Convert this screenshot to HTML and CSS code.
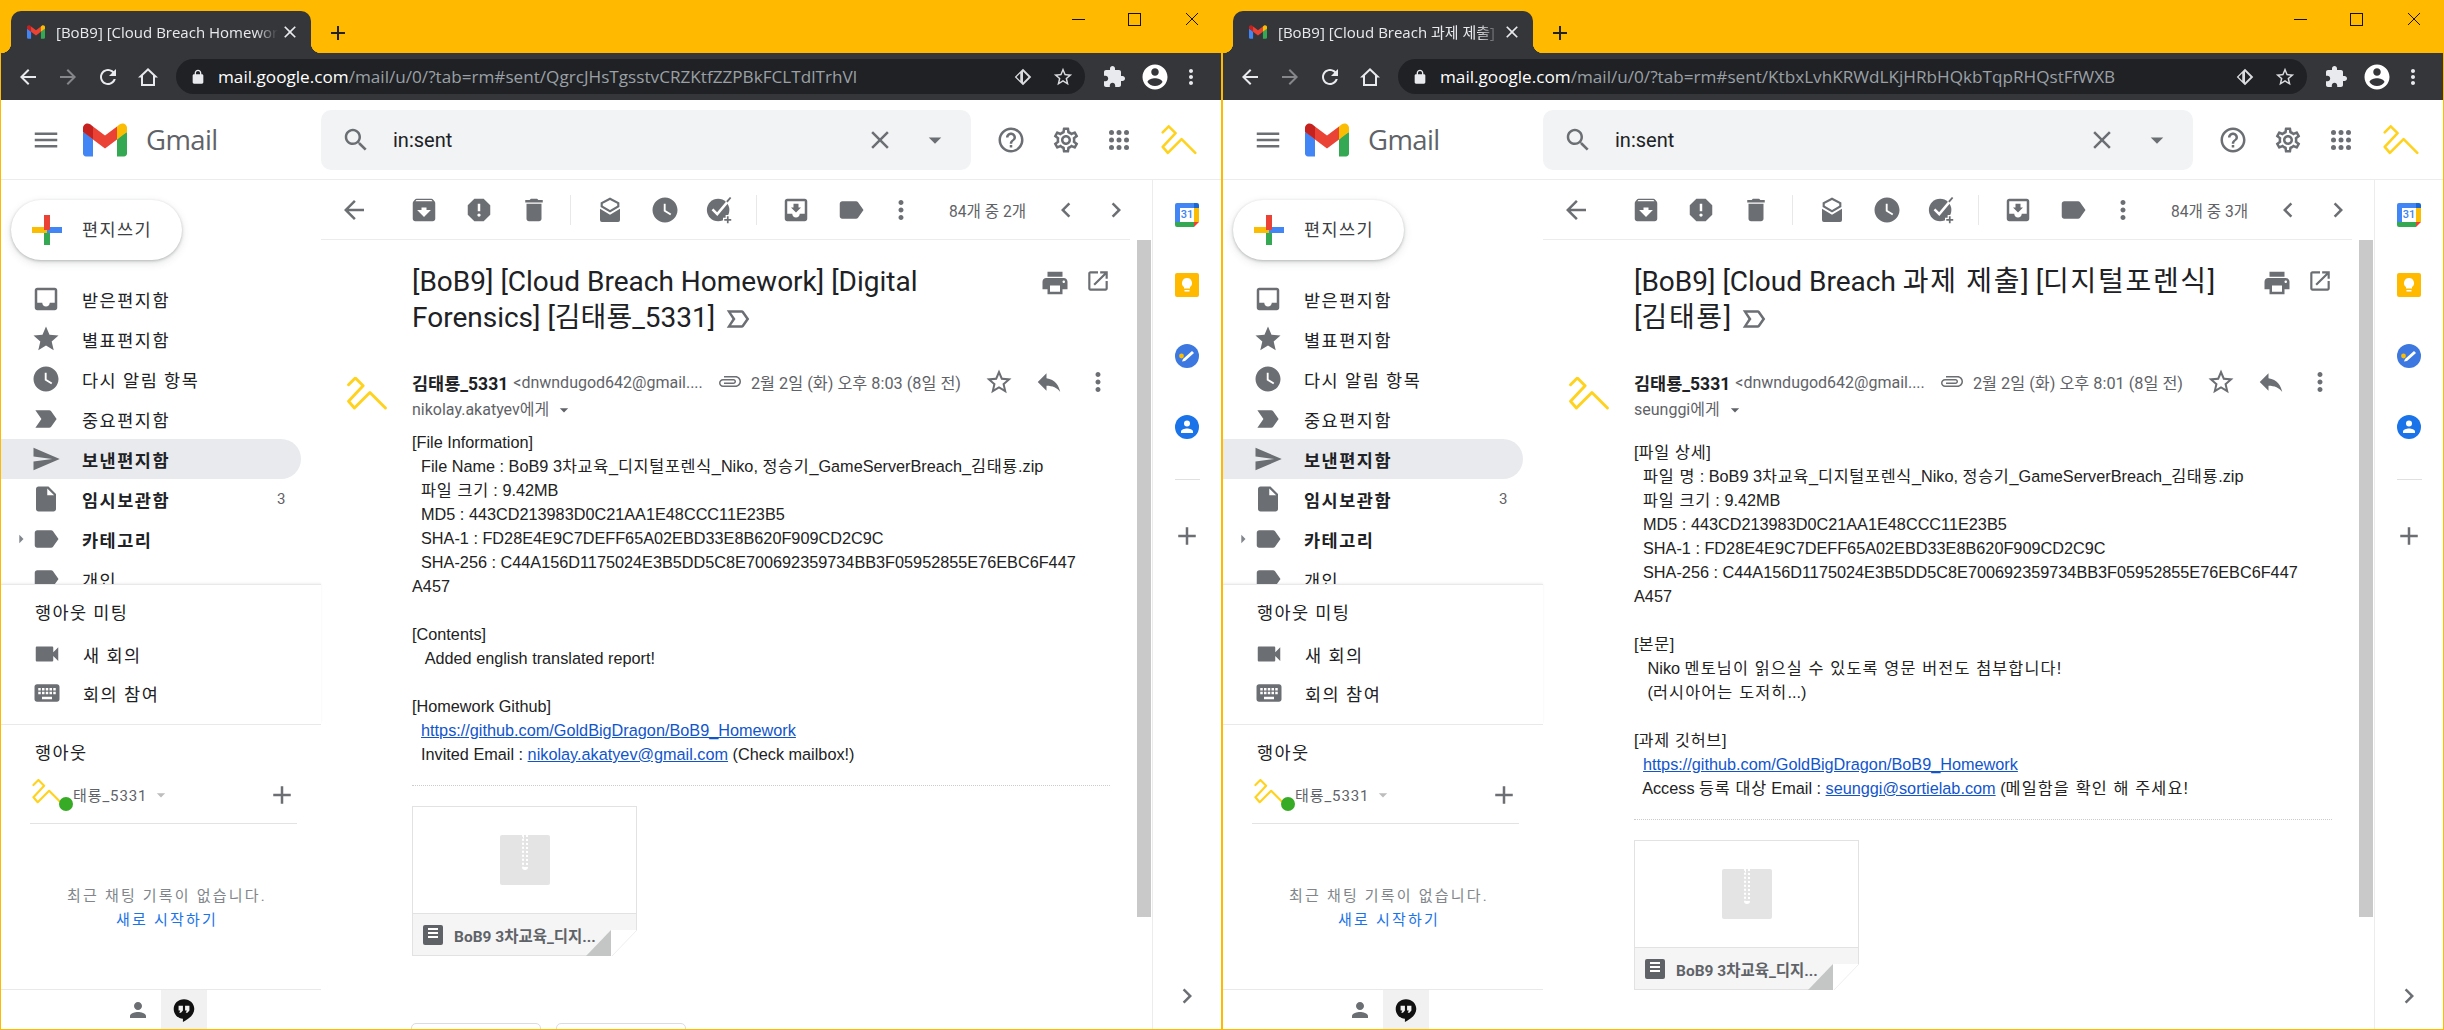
FILE: index.html
```html
<!DOCTYPE html>
<html lang="ko">
<head>
<meta charset="utf-8">
<title>Gmail</title>
<link rel="stylesheet" href="styles.css">
</head>
<body>
<svg class="defs" xmlns="http://www.w3.org/2000/svg">
  <symbol id="back" viewBox="0 0 24 24"><path d="M20 11H7.83l5.59-5.59L12 4l-8 8 8 8 1.41-1.41L7.83 13H20v-2z"/></symbol>
  <symbol id="fwd" viewBox="0 0 24 24"><path d="M4 11h12.17l-5.59-5.59L12 4l8 8-8 8-1.41-1.41L16.17 13H4v-2z"/></symbol>
  <symbol id="reload" viewBox="0 0 24 24"><path d="M17.65 6.35C16.2 4.9 14.21 4 12 4c-4.42 0-7.99 3.58-7.99 8s3.57 8 7.99 8c3.73 0 6.84-2.55 7.73-6h-2.08c-.82 2.33-3.04 4-5.65 4-3.31 0-6-2.69-6-6s2.69-6 6-6c1.66 0 3.14.69 4.22 1.78L13 11h7V4l-2.35 2.35z"/></symbol>
  <symbol id="home" viewBox="0 0 24 24"><path fill-rule="evenodd" d="M12 3L2 12.5h3V21h14v-8.500h3zM12 5.800l5 4.700V19H7v-8.500z"/></symbol>
  <symbol id="lock" viewBox="0 0 24 24"><path d="M18 8h-1V6c0-2.760-2.240-5-5-5S7 3.240 7 6v2H6c-1.100 0-2 .9-2 2v10c0 1.100.9 2 2 2h12c1.100 0 2-.9 2-2V10c0-1.100-.9-2-2-2zM9 6c0-1.660 1.340-3 3-3s3 1.340 3 3v2H9V6z"/></symbol>
  <symbol id="staro" viewBox="0 0 24 24"><path d="M22 9.240l-7.190-.62L12 2 9.190 8.630 2 9.240l5.460 4.730L5.820 21 12 17.270 18.180 21l-1.630-7.030L22 9.240zM12 15.400l-3.760 2.270 1-4.280-3.320-2.880 4.380-.38L12 6.100l1.710 4.040 4.380.38-3.320 2.880 1 4.280L12 15.400z"/></symbol>
  <symbol id="star" viewBox="0 0 24 24"><path d="M12 17.270L18.180 21l-1.640-7.030L22 9.240l-7.190-.61L12 2 9.190 8.630 2 9.240l5.460 4.730L5.820 21z"/></symbol>
  <symbol id="ext" viewBox="0 0 24 24"><path d="M20.500 11H19V7c0-1.100-.9-2-2-2h-4V3.500C13 2.120 11.880 1 10.500 1S8 2.120 8 3.500V5H4c-1.100 0-1.990.9-1.990 2v3.800H3.500c1.490 0 2.700 1.210 2.700 2.700s-1.210 2.700-2.700 2.700H2V20c0 1.100.9 2 2 2h3.800v-1.500c0-1.490 1.210-2.700 2.700-2.700 1.490 0 2.700 1.210 2.700 2.700V22H17c1.100 0 2-.9 2-2v-4h1.500c1.380 0 2.500-1.120 2.500-2.500S21.880 11 20.500 11z"/></symbol>
  <symbol id="acct" viewBox="0 0 24 24"><path d="M12 2C6.480 2 2 6.480 2 12s4.480 10 10 10 10-4.480 10-10S17.520 2 12 2zm0 3c1.660 0 3 1.340 3 3s-1.340 3-3 3-3-1.340-3-3 1.340-3 3-3zm0 14.200c-2.500 0-4.710-1.280-6-3.220.03-1.990 4-3.080 6-3.080 1.990 0 5.970 1.090 6 3.080-1.290 1.940-3.500 3.220-6 3.220z"/></symbol>
  <symbol id="more" viewBox="0 0 24 24"><path d="M12 8c1.100 0 2-.9 2-2s-.9-2-2-2-2 .9-2 2 .9 2 2 2zm0 2c-1.100 0-2 .9-2 2s.9 2 2 2 2-.9 2-2-.9-2-2-2zm0 6c-1.100 0-2 .9-2 2s.9 2 2 2 2-.9 2-2-.9-2-2-2z"/></symbol>
  <symbol id="menu" viewBox="0 0 24 24"><path d="M3 18h18v-2H3v2zm0-5h18v-2H3v2zm0-7v2h18V6H3z"/></symbol>
  <symbol id="search" viewBox="0 0 24 24"><path d="M15.500 14h-.79l-.28-.27C15.410 12.590 16 11.110 16 9.500 16 5.910 13.090 3 9.500 3S3 5.910 3 9.500 5.910 16 9.500 16c1.610 0 3.090-.59 4.230-1.570l.27.28v.79l5 4.990L20.490 19l-4.990-5zm-6 0C7.010 14 5 11.990 5 9.500S7.010 5 9.500 5 14 7.010 14 9.500 11.990 14 9.500 14z"/></symbol>
  <symbol id="close" viewBox="0 0 24 24"><path d="M19 6.410L17.590 5 12 10.590 6.410 5 5 6.410 10.590 12 5 17.590 6.410 19 12 13.410 17.590 19 19 17.590 13.410 12z"/></symbol>
  <symbol id="caret" viewBox="0 0 24 24"><path d="M7 10l5 5 5-5z"/></symbol>
  <symbol id="caretr" viewBox="0 0 24 24"><path d="M10 7l5 5-5 5z"/></symbol>
  <symbol id="help" viewBox="0 0 24 24"><path d="M11 18h2v-2h-2v2zm1-16C6.480 2 2 6.480 2 12s4.480 10 10 10 10-4.480 10-10S17.520 2 12 2zm0 18c-4.410 0-8-3.590-8-8s3.590-8 8-8 8 3.590 8 8-3.590 8-8 8zm0-14c-2.210 0-4 1.790-4 4h2c0-1.100.9-2 2-2s2 .9 2 2c0 2-3 1.750-3 5h2c0-2.250 3-2.500 3-5 0-2.210-1.790-4-4-4z"/></symbol>
  <symbol id="gear" viewBox="0 0 24 24"><path d="M19.430 12.980c.04-.32.07-.64.07-.98 0-.34-.03-.66-.07-.98l2.110-1.650c.19-.15.24-.42.12-.64l-2-3.460c-.09-.16-.26-.25-.44-.25-.06 0-.12.01-.17.03l-2.490 1c-.52-.4-1.080-.73-1.690-.98l-.38-2.650C14.460 2.180 14.250 2 14 2h-4c-.25 0-.46.18-.49.42l-.38 2.650c-.61.25-1.170.59-1.690.98l-2.490-1c-.06-.02-.12-.03-.18-.03-.17 0-.34.09-.43.25l-2 3.460c-.13.22-.07.49.12.64l2.110 1.650c-.04.32-.07.65-.07.98 0 .33.03.66.07.98l-2.110 1.650c-.19.15-.24.42-.12.64l2 3.460c.09.16.26.25.44.25.06 0 .12-.01.17-.03l2.490-1c.52.4 1.080.73 1.690.98l.38 2.650c.03.24.24.42.49.42h4c.25 0 .46-.18.49-.42l.38-2.650c.61-.25 1.170-.59 1.690-.98l2.490 1c.06.02.12.03.18.03.17 0 .34-.09.43-.25l2-3.460c.12-.22.07-.49-.12-.64l-2.110-1.650zm-1.980-1.710c.04.31.05.52.05.73 0 .21-.02.43-.05.73l-.14 1.130.89.7 1.080.84-.7 1.210-1.270-.51-1.040-.42-.9.68c-.43.32-.84.56-1.250.73l-1.060.43-.16 1.130-.2 1.350h-1.400l-.19-1.350-.16-1.130-1.060-.43c-.43-.18-.83-.41-1.230-.71l-.91-.7-1.060.43-1.270.51-.7-1.210 1.080-.84.89-.7-.14-1.130c-.03-.31-.05-.54-.05-.74s.02-.43.05-.73l.14-1.130-.89-.7-1.080-.84.7-1.210 1.270.51 1.040.42.9-.68c.43-.32.84-.56 1.250-.73l1.060-.43.16-1.130.2-1.350h1.390l.19 1.350.16 1.130 1.060.43c.43.18.83.41 1.230.71l.91.7 1.060-.43 1.270-.51.7 1.210-1.070.85-.89.7.14 1.130zM12 8c-2.210 0-4 1.790-4 4s1.790 4 4 4 4-1.790 4-4-1.790-4-4-4zm0 6c-1.100 0-2-.9-2-2s.9-2 2-2 2 .9 2 2-.9 2-2 2z"/></symbol>
  <symbol id="apps" viewBox="0 0 24 24"><circle cx="6" cy="6" r="2"/><circle cx="12" cy="6" r="2"/><circle cx="18" cy="6" r="2"/><circle cx="6" cy="12" r="2"/><circle cx="12" cy="12" r="2"/><circle cx="18" cy="12" r="2"/><circle cx="6" cy="18" r="2"/><circle cx="12" cy="18" r="2"/><circle cx="18" cy="18" r="2"/></symbol>
  <symbol id="inbox" viewBox="0 0 24 24"><path d="M19 3H5c-1.100 0-2 .9-2 2v14c0 1.100.9 2 2 2h14c1.100 0 2-.9 2-2V5c0-1.100-.9-2-2-2zm0 12h-4c0 1.660-1.340 3-3 3s-3-1.340-3-3H5V5h14v10z"/></symbol>
  <symbol id="clock" viewBox="0 0 24 24"><path d="M12 2C6.500 2 2 6.500 2 12s4.500 10 10 10 10-4.500 10-10S17.500 2 12 2zm4.200 14.200L11 13V7h1.500v5.200l4.500 2.700-.8 1.300z"/></symbol>
  <symbol id="imp" viewBox="0 0 24 24"><path d="M3.500 18.990l11 .01c.67 0 1.270-.33 1.630-.84L20.500 12l-4.370-6.160c-.36-.51-.96-.84-1.630-.84l-11 .01L8.340 12 3.500 18.990z"/></symbol>
  <symbol id="impo" viewBox="0 0 24 24"><path d="M15 19H3l4.500-7L3 5h12c.65 0 1.260.31 1.630.84L21 12l-4.370 6.160c-.37.52-.98.84-1.630.84zm-8.500-2H15l3.500-5-3.500-5H6.500l3.500 5-3.500 5z"/></symbol>
  <symbol id="send" viewBox="0 0 24 24"><path d="M2.010 21L23 12 2.010 3 2 10l15 2-15 2z"/></symbol>
  <symbol id="file" viewBox="0 0 24 24"><path d="M6 2c-1.100 0-1.990.9-1.990 2L4 20c0 1.100.89 2 1.990 2H18c1.100 0 2-.9 2-2V8l-6-6H6zm7 7V3.500L18.500 9H13z"/></symbol>
  <symbol id="label" viewBox="0 0 24 24"><path d="M17.630 5.840C17.270 5.330 16.670 5 16 5L5 5.010C3.900 5.010 3 5.900 3 7v10c0 1.100.9 1.990 2 1.990L16 19c.67 0 1.270-.33 1.630-.84L22 12l-4.370-6.160z"/></symbol>
  <symbol id="video" viewBox="0 0 24 24"><path d="M17 10.500V7c0-.55-.45-1-1-1H4c-.55 0-1 .45-1 1v10c0 .55.45 1 1 1h12c.55 0 1-.45 1-1v-3.500l4 4v-11l-4 4z"/></symbol>
  <symbol id="kbd" viewBox="0 0 24 24"><path d="M20 5H4c-1.100 0-1.990.9-1.990 2L2 17c0 1.100.9 2 2 2h16c1.100 0 2-.9 2-2V7c0-1.100-.9-2-2-2zm-9 3h2v2h-2V8zm0 3h2v2h-2v-2zM8 8h2v2H8V8zm0 3h2v2H8v-2zm-1 2H5v-2h2v2zm0-3H5V8h2v2zm9 7H8v-2h8v2zm0-4h-2v-2h2v2zm0-3h-2V8h2v2zm3 3h-2v-2h2v2zm0-3h-2V8h2v2z"/></symbol>
  <symbol id="add" viewBox="0 0 24 24"><path d="M19 13h-6v6h-2v-6H5v-2h6V5h2v6h6v2z"/></symbol>
  <symbol id="person" viewBox="0 0 24 24"><path d="M12 12c2.210 0 4-1.790 4-4s-1.790-4-4-4-4 1.790-4 4 1.790 4 4 4zm0 2c-2.670 0-8 1.340-8 4v2h16v-2c0-2.660-5.330-4-8-4z"/></symbol>
  <symbol id="archive" viewBox="0 0 24 24"><path d="M20.540 5.230l-1.390-1.680C18.880 3.210 18.470 3 18 3H6c-.47 0-.88.21-1.160.55L3.460 5.230C3.170 5.570 3 6.020 3 6.500V19c0 1.100.9 2 2 2h14c1.100 0 2-.9 2-2V6.500c0-.48-.17-.93-.46-1.270zM12 17.500L6.500 12H10v-2h4v2h3.500L12 17.500zM5.120 5l.81-1h12l.94 1H5.120z"/></symbol>
  <symbol id="report" viewBox="0 0 24 24"><path d="M15.730 3H8.270L3 8.270v7.460L8.270 21h7.460L21 15.730V8.270L15.730 3zM12 17.300c-.72 0-1.300-.58-1.300-1.300 0-.72.58-1.300 1.300-1.300.72 0 1.300.58 1.300 1.300 0 .72-.58 1.300-1.300 1.300zm1-4.300h-2V7h2v6z"/></symbol>
  <symbol id="trash" viewBox="0 0 24 24"><path d="M6 19c0 1.100.9 2 2 2h8c1.100 0 2-.9 2-2V7H6v12zM19 4h-3.500l-1-1h-5l-1 1H5v2h14V4z"/></symbol>
  <symbol id="drafts" viewBox="0 0 24 24"><path d="M12 2L4.500 6v3.500L12 14l7.500-4.500V6zM6.200 7l5.800-3 5.800 3v1.500L12 12 6.200 8.500z" fill-rule="evenodd"/><path d="M4 11l8 4.800 8-4.800v9a1.500 1.500 0 0 1-1.500 1.500h-13A1.500 1.500 0 0 1 4 20z"/></symbol>
  <symbol id="task" viewBox="0 0 24 24"><circle cx="10.500" cy="12" r="9"/><path d="M6 11.500l3.800 3.800L18 5.500" fill="none" stroke="#fff" stroke-width="2"/><path d="M17.500 5.500l3-3.500" fill="none" stroke="#6b6e72" stroke-width="1.500"/><path d="M17 16.500h2.400v2.100h2.100V21h-2.100v2.100H17V21h-2.100v-2.400H17z" stroke="#fff" stroke-width="1"/></symbol>
  <symbol id="move" viewBox="0 0 24 24"><path d="M19 3H4.990c-1.110 0-1.980.89-1.980 2L3 19c0 1.100.88 2 1.990 2H19c1.100 0 2-.9 2-2V5c0-1.110-.9-2-2-2zm0 12h-4c0 1.660-1.350 3-3 3s-3-1.340-3-3H4.990V5H19v10zm-3-5h-2V7h-4v3H8l4 4 4-4z"/></symbol>
  <symbol id="left" viewBox="0 0 24 24"><path d="M15.410 7.410L14 6l-6 6 6 6 1.410-1.410L10.830 12z"/></symbol>
  <symbol id="right" viewBox="0 0 24 24"><path d="M10 6L8.590 7.410 13.170 12l-4.580 4.590L10 18l6-6z"/></symbol>
  <symbol id="print" viewBox="0 0 24 24"><path d="M19 8H5c-1.660 0-3 1.340-3 3v6h4v4h12v-4h4v-6c0-1.660-1.340-3-3-3zm-3 11H8v-5h8v5zm3-7c-.55 0-1-.45-1-1s.45-1 1-1 1 .45 1 1-.45 1-1 1zm-1-9H6v4h12V3z"/></symbol>
  <symbol id="open" viewBox="0 0 24 24"><path d="M19 19H5V5h7V3H5c-1.110 0-2 .9-2 2v14c0 1.100.89 2 2 2h14c1.100 0 2-.9 2-2v-7h-2v7zM14 3v2h3.590l-9.830 9.830 1.410 1.410L19 6.410V10h2V3h-7z"/></symbol>
  <symbol id="clip" viewBox="0 0 24 24"><path transform="rotate(-90 12 12)" d="M16.500 6v11.500c0 2.210-1.790 4-4 4s-4-1.790-4-4V5c0-1.380 1.120-2.500 2.500-2.500s2.500 1.120 2.500 2.500v10.500c0 .55-.45 1-1 1s-1-.45-1-1V6H10v9.500c0 1.380 1.120 2.500 2.500 2.500s2.500-1.120 2.500-2.500V5c0-2.210-1.790-4-4-4S7 2.790 7 5v12.500c0 3.040 2.460 5.500 5.500 5.500s5.500-2.460 5.500-5.500V6h-1.500z"/></symbol>
  <symbol id="reply" viewBox="0 0 24 24"><path d="M10 9V5l-7 7 7 7v-4.100c5 0 8.500 1.600 11 5.100-1-5-4-10-11-11z"/></symbol>
  <symbol id="lens" viewBox="0 0 24 24"><path d="M12 3l9 9-9 9-9-9zM12 6v12l6-6zM9 8l-4 4 4 4z" fill-rule="evenodd"/></symbol>
  <symbol id="chat" viewBox="0 0 24 24"><path d="M12 2C6.500 2 2.500 6 2.500 11S6.500 20 11 20v3c5-2.500 10.500-6.500 10.500-12C21.500 6 17.500 2 12 2z"/><path fill="#f1f1f1" d="M7 8h4v4.500l-1.800 2H7.600l1-2H7zM13 8h4v4.500l-1.800 2h-1.600l1-2H13z"/></symbol>
  <symbol id="logo" viewBox="0 0 42 34"><path fill="none" stroke="#ffd21e" stroke-width="3" stroke-linejoin="round" stroke-linecap="round" d="M2 8l7-7 8 8L2 25l6 7 16-16 16 16"/></symbol>
  <symbol id="gm" viewBox="0 0 256 193"><path fill="#4285F4" d="M58.180 192.050V93.140L27.500 65.080 0 49.500v125.100c0 9.660 7.830 17.450 17.450 17.450h40.730z"/><path fill="#34A853" d="M197.820 192.050h40.730c9.650 0 17.450-7.820 17.450-17.450V49.500l-31.160 17.840-27.020 25.800v98.910z"/><path fill="#EA4335" d="M58.180 93.140l-4.170-38.650 4.170-36.990L128 69.870l69.820-52.370 4.670 34.990-4.670 40.650L128 145.500z"/><path fill="#FBBC04" d="M197.820 17.500v75.640L256 49.500V26.230c0-21.590-24.640-33.890-41.890-20.950l-16.290 12.220z"/><path fill="#C5221F" d="M0 49.500l26.760 20.070 31.420 23.570V17.500L41.890 5.280C24.610-7.660 0 4.640 0 26.230V49.500z"/></symbol>
  <symbol id="plus4" viewBox="0 0 30 30"><path fill="#34a853" d="M12 15h6v15h-6z"/><path fill="#4285f4" d="M15 12h15v6H15z"/><path fill="#fbbc04" d="M0 12h15v6H0z"/><path fill="#ea4335" d="M12 0h6v15h-6z"/></symbol>
  <symbol id="cal" viewBox="0 0 24 24"><path fill="#4285f4" d="M2 0h17v5H5v14H0V2a2 2 0 0 1 2-2z"/><path fill="#1967d2" d="M19 0h3a2 2 0 0 1 2 2v3h-5z"/><path fill="#fbbc04" d="M19 5h5v14h-5z"/><path fill="#34a853" d="M0 19h19v5H2a2 2 0 0 1-2-2z"/><path fill="#ea4335" d="M19 19h5l-5 5z"/><path fill="#fff" d="M5 5h14v14H5z"/></symbol>
  <symbol id="keep" viewBox="0 0 24 24"><rect width="24" height="24" rx="2" fill="#ffba00"/><path fill="#fff" d="M12 5a5 5 0 0 0-3 9v1.500h6V14a5 5 0 0 0-3-9zM9.500 17h5v1.500h-5z"/></symbol>
  <symbol id="tasks" viewBox="0 0 24 24"><circle cx="12" cy="12" r="12" fill="#3c78e0"/><path fill="#fff" d="M8 15l9-8 2 2-9 8-3 .5z"/><circle cx="6.500" cy="12" r="2.400" fill="#fbbc04"/></symbol>
  <symbol id="cont" viewBox="0 0 24 24"><circle cx="12" cy="12" r="12" fill="#1a73e8"/><circle cx="12" cy="8.500" r="3" fill="#fff"/><path fill="#fff" d="M6 16.500c0-2 3.500-3 6-3s6 1 6 3V18H6z"/></symbol>
</svg>

<main class="desk">

<section class="win">
  <div class="tabstrip">
    <div class="tab">
      <svg class="fav"><use href="#gm"/></svg>
      <span class="tab-title">[BoB9] [Cloud Breach Homework] [Digital Forensics]</span>
      <svg class="tab-x"><use href="#close"/></svg>
    </div>
    <svg class="newtab"><use href="#add"/></svg>
    <div class="winctl">
      <span class="wc-min"></span><span class="wc-max"></span>
      <svg class="wc-close" viewBox="0 0 14 14"><path d="M1 1l12 12M13 1L1 13"/></svg>
    </div>
  </div>
  <div class="chrome">
    <svg class="cb"><use href="#back"/></svg>
    <svg class="cb dim"><use href="#fwd"/></svg>
    <svg class="cb"><use href="#reload"/></svg>
    <svg class="cb"><use href="#home"/></svg>
    <div class="omni">
      <svg class="lock"><use href="#lock"/></svg>
      <span class="url"><b>mail.google.com</b>/mail/u/0/?tab=rm#sent/QgrcJHsTgsstvCRZKtfZZPBkFCLTdlTrhVl</span>
      <svg class="omni-i"><use href="#lens"/></svg>
      <svg class="omni-i last"><use href="#staro"/></svg>
    </div>
    <svg class="cb first"><use href="#ext"/></svg>
    <svg class="cb big"><use href="#acct"/></svg>
    <svg class="cb"><use href="#more"/></svg>
  </div>
  <header class="ghead">
    <div class="brand">
      <svg class="i ham"><use href="#menu"/></svg>
      <svg class="mlogo"><use href="#gm"/></svg>
      <span class="gname">Gmail</span>
    </div>
    <div class="searchbox">
      <svg class="i"><use href="#search"/></svg>
      <span class="q">in:sent</span>
      <svg class="i"><use href="#close"/></svg>
      <svg class="i q-caret"><use href="#caret"/></svg>
    </div>
    <svg class="i h1st"><use href="#help"/></svg>
    <svg class="i h2"><use href="#gear"/></svg>
    <svg class="i h3"><use href="#apps"/></svg>
    <svg class="hlogo"><use href="#logo"/></svg>
  </header>
  <div class="main">
    <nav class="side">
      <div class="compose"><svg class="i"><use href="#plus4"/></svg><span>편지쓰기</span></div>
      <div class="nav">
        <div class="row"><svg class="i"><use href="#inbox"/></svg><span>받은편지함</span></div>
        <div class="row"><svg class="i"><use href="#star"/></svg><span>별표편지함</span></div>
        <div class="row"><svg class="i"><use href="#clock"/></svg><span>다시 알림 항목</span></div>
        <div class="row"><svg class="i"><use href="#imp"/></svg><span>중요편지함</span></div>
        <div class="row on"><svg class="i"><use href="#send"/></svg><span>보낸편지함</span></div>
        <div class="row bold"><svg class="i"><use href="#file"/></svg><span>임시보관함</span><em>3</em></div>
        <div class="row bold"><svg class="tree"><use href="#caretr"/></svg><svg class="i"><use href="#label"/></svg><span>카테고리</span></div>
        <div class="row"><svg class="i"><use href="#label"/></svg><span>개인</span></div>
      </div>
      <div class="sect meet">
        <div class="sect-t">행아웃 미팅</div>
        <div class="row"><svg class="i"><use href="#video"/></svg><span>새 회의</span></div>
        <div class="row"><svg class="i"><use href="#kbd"/></svg><span>회의 참여</span></div>
      </div>
      <div class="sect hang">
        <div class="sect-t">행아웃</div>
        <div class="huser">
          <div class="hava"><svg class="hlogo2"><use href="#logo"/></svg><i class="dot"></i></div>
          <span class="hname">태룡_5331</span>
          <svg class="hcaret"><use href="#caret"/></svg>
          <svg class="i hadd"><use href="#add"/></svg>
        </div>
      </div>
      <div class="empty"><div>최근 채팅 기록이 없습니다.</div><a href="#">새로 시작하기</a></div>
      <div class="sbot">
        <div class="stab"><svg class="i"><use href="#person"/></svg></div>
        <div class="stab act"><svg class="i blk"><use href="#chat"/></svg></div>
      </div>
    </nav>
    <div class="content">
      <div class="ctool">
        <span class="tb b0"><svg class="i"><use href="#back"/></svg></span>
        <span class="tb b1"><svg class="i"><use href="#archive"/></svg></span>
        <span class="tb"><svg class="i"><use href="#report"/></svg></span>
        <span class="tb"><svg class="i"><use href="#trash"/></svg></span>
        <i class="tsep"></i>
        <span class="tb"><svg class="i"><use href="#drafts"/></svg></span>
        <span class="tb"><svg class="i"><use href="#clock"/></svg></span>
        <span class="tb"><svg class="i"><use href="#task"/></svg></span>
        <i class="tsep"></i>
        <span class="tb"><svg class="i"><use href="#move"/></svg></span>
        <span class="tb"><svg class="i"><use href="#label"/></svg></span>
        <span class="tb bm"><svg class="i"><use href="#more"/></svg></span>
        <span class="cnt">84개 중 2개</span>
        <span class="tb n"><svg class="i"><use href="#left"/></svg></span>
        <span class="tb n"><svg class="i"><use href="#right"/></svg></span>
      </div>
      <div class="scrollwrap">
        <article class="mail">
          <div class="subj">
            <h1>[BoB9] [Cloud Breach Homework] [Digital<br>Forensics] [김태룡_5331] <svg class="i impm"><use href="#impo"/></svg></h1>
            <svg class="i sa"><use href="#print"/></svg>
            <svg class="i sa2"><use href="#open"/></svg>
          </div>
          <div class="msg">
            <svg class="ava"><use href="#logo"/></svg>
            <div class="msg-main">
              <div class="mh">
                <b class="who">김태룡_5331</b><span class="addr">&lt;dnwndugod642@gmail....</span>
                <svg class="i clip"><use href="#clip"/></svg>
                <span class="date">2월 2일 (화) 오후 8:03 (8일 전)</span>
                <svg class="i mstar"><use href="#staro"/></svg>
                <svg class="i mrep"><use href="#reply"/></svg>
                <svg class="i"><use href="#more"/></svg>
              </div>
              <div class="to">nikolay.akatyev에게<svg class="tocaret"><use href="#caret"/></svg></div>
              <div class="body">
                <div class="ln">[File Information]</div>
                <div class="ln">  File Name : BoB9 3<span class="k">차교육</span>_<span class="k">디지털포렌식</span>_Niko, <span class="k">정승기</span>_GameServerBreach_<span class="k">김태룡</span>.zip</div>
                <div class="ln">  <span class="k">파일 크기</span> : 9.42MB</div>
                <div class="ln">  MD5 : 443CD213983D0C21AA1E48CCC11E23B5</div>
                <div class="ln">  SHA-1 : FD28E4E9C7DEFF65A02EBD33E8B620F909CD2C9C</div>
                <div class="ln">  SHA-256 : C44A156D1175024E3B5DD5C8E700692359734BB3F05952855E76EBC6F447</div>
                <div class="ln">A457</div>
                <div class="ln"></div>
                <div class="ln">[Contents]</div>
                <div class="ln">   Added english translated report!</div>
                <div class="ln"></div>
                <div class="ln">[Homework Github]</div>
                <div class="ln">  <a href="#">https://github.com/GoldBigDragon/BoB9_Homework</a></div>
                <div class="ln">  Invited Email : <a href="#">nikolay.akatyev@gmail.com</a> (Check mailbox!)</div>
              </div>
              <div class="dots"></div>
              <div class="card">
                <div class="card-top"><div class="zip"><i></i></div></div>
                <div class="card-foot"><span class="ficon"></span><span class="fname">BoB9 3차교육_디지...</span></div>
                <svg class="fold" viewBox="0 0 51 26"><path fill="#fff" d="M25 0h26v26H25z"/><path fill="#c4c5c5" d="M0 26L25 0v26z"/><path fill="none" stroke="#eee" d="M26 26L51 0"/></svg>
              </div>
              <div class="btns"><span class="rbtn"></span><span class="rbtn"></span></div>
            </div>
          </div>
        </article>
        <div class="thumb"></div>
      </div>
    </div>
    <aside class="rail">
      <div class="calwrap"><svg class="ri"><use href="#cal"/></svg><span class="c31">31</span></div>
      <svg class="ri"><use href="#keep"/></svg>
      <svg class="ri"><use href="#tasks"/></svg>
      <svg class="ri"><use href="#cont"/></svg>
      <i class="rsep"></i>
      <svg class="i"><use href="#add"/></svg>
      <svg class="i rchev"><use href="#right"/></svg>
    </aside>
  </div>
</section>

<section class="win">
  <div class="tabstrip">
    <div class="tab">
      <svg class="fav"><use href="#gm"/></svg>
      <span class="tab-title">[BoB9] [Cloud Breach 과제 제출] [디지털포렌식] [김태룡]</span>
      <svg class="tab-x"><use href="#close"/></svg>
    </div>
    <svg class="newtab"><use href="#add"/></svg>
    <div class="winctl">
      <span class="wc-min"></span><span class="wc-max"></span>
      <svg class="wc-close" viewBox="0 0 14 14"><path d="M1 1l12 12M13 1L1 13"/></svg>
    </div>
  </div>
  <div class="chrome">
    <svg class="cb"><use href="#back"/></svg>
    <svg class="cb dim"><use href="#fwd"/></svg>
    <svg class="cb"><use href="#reload"/></svg>
    <svg class="cb"><use href="#home"/></svg>
    <div class="omni">
      <svg class="lock"><use href="#lock"/></svg>
      <span class="url"><b>mail.google.com</b>/mail/u/0/?tab=rm#sent/KtbxLvhKRWdLKjHRbHQkbTqpRHQstFfWXB</span>
      <svg class="omni-i"><use href="#lens"/></svg>
      <svg class="omni-i last"><use href="#staro"/></svg>
    </div>
    <svg class="cb first"><use href="#ext"/></svg>
    <svg class="cb big"><use href="#acct"/></svg>
    <svg class="cb"><use href="#more"/></svg>
  </div>
  <header class="ghead">
    <div class="brand">
      <svg class="i ham"><use href="#menu"/></svg>
      <svg class="mlogo"><use href="#gm"/></svg>
      <span class="gname">Gmail</span>
    </div>
    <div class="searchbox">
      <svg class="i"><use href="#search"/></svg>
      <span class="q">in:sent</span>
      <svg class="i"><use href="#close"/></svg>
      <svg class="i q-caret"><use href="#caret"/></svg>
    </div>
    <svg class="i h1st"><use href="#help"/></svg>
    <svg class="i h2"><use href="#gear"/></svg>
    <svg class="i h3"><use href="#apps"/></svg>
    <svg class="hlogo"><use href="#logo"/></svg>
  </header>
  <div class="main">
    <nav class="side">
      <div class="compose"><svg class="i"><use href="#plus4"/></svg><span>편지쓰기</span></div>
      <div class="nav">
        <div class="row"><svg class="i"><use href="#inbox"/></svg><span>받은편지함</span></div>
        <div class="row"><svg class="i"><use href="#star"/></svg><span>별표편지함</span></div>
        <div class="row"><svg class="i"><use href="#clock"/></svg><span>다시 알림 항목</span></div>
        <div class="row"><svg class="i"><use href="#imp"/></svg><span>중요편지함</span></div>
        <div class="row on"><svg class="i"><use href="#send"/></svg><span>보낸편지함</span></div>
        <div class="row bold"><svg class="i"><use href="#file"/></svg><span>임시보관함</span><em>3</em></div>
        <div class="row bold"><svg class="tree"><use href="#caretr"/></svg><svg class="i"><use href="#label"/></svg><span>카테고리</span></div>
        <div class="row"><svg class="i"><use href="#label"/></svg><span>개인</span></div>
      </div>
      <div class="sect meet">
        <div class="sect-t">행아웃 미팅</div>
        <div class="row"><svg class="i"><use href="#video"/></svg><span>새 회의</span></div>
        <div class="row"><svg class="i"><use href="#kbd"/></svg><span>회의 참여</span></div>
      </div>
      <div class="sect hang">
        <div class="sect-t">행아웃</div>
        <div class="huser">
          <div class="hava"><svg class="hlogo2"><use href="#logo"/></svg><i class="dot"></i></div>
          <span class="hname">태룡_5331</span>
          <svg class="hcaret"><use href="#caret"/></svg>
          <svg class="i hadd"><use href="#add"/></svg>
        </div>
      </div>
      <div class="empty"><div>최근 채팅 기록이 없습니다.</div><a href="#">새로 시작하기</a></div>
      <div class="sbot">
        <div class="stab"><svg class="i"><use href="#person"/></svg></div>
        <div class="stab act"><svg class="i blk"><use href="#chat"/></svg></div>
      </div>
    </nav>
    <div class="content">
      <div class="ctool">
        <span class="tb b0"><svg class="i"><use href="#back"/></svg></span>
        <span class="tb b1"><svg class="i"><use href="#archive"/></svg></span>
        <span class="tb"><svg class="i"><use href="#report"/></svg></span>
        <span class="tb"><svg class="i"><use href="#trash"/></svg></span>
        <i class="tsep"></i>
        <span class="tb"><svg class="i"><use href="#drafts"/></svg></span>
        <span class="tb"><svg class="i"><use href="#clock"/></svg></span>
        <span class="tb"><svg class="i"><use href="#task"/></svg></span>
        <i class="tsep"></i>
        <span class="tb"><svg class="i"><use href="#move"/></svg></span>
        <span class="tb"><svg class="i"><use href="#label"/></svg></span>
        <span class="tb bm"><svg class="i"><use href="#more"/></svg></span>
        <span class="cnt">84개 중 3개</span>
        <span class="tb n"><svg class="i"><use href="#left"/></svg></span>
        <span class="tb n"><svg class="i"><use href="#right"/></svg></span>
      </div>
      <div class="scrollwrap">
        <article class="mail">
          <div class="subj">
            <h1>[BoB9] [Cloud Breach <span class="kt">과제 제출</span>] [<span class="kt">디지털포렌식</span>]<br>[<span class="kt">김태룡</span>] <svg class="i impm"><use href="#impo"/></svg></h1>
            <svg class="i sa"><use href="#print"/></svg>
            <svg class="i sa2"><use href="#open"/></svg>
          </div>
          <div class="msg">
            <svg class="ava"><use href="#logo"/></svg>
            <div class="msg-main">
              <div class="mh">
                <b class="who">김태룡_5331</b><span class="addr">&lt;dnwndugod642@gmail....</span>
                <svg class="i clip"><use href="#clip"/></svg>
                <span class="date">2월 2일 (화) 오후 8:01 (8일 전)</span>
                <svg class="i mstar"><use href="#staro"/></svg>
                <svg class="i mrep"><use href="#reply"/></svg>
                <svg class="i"><use href="#more"/></svg>
              </div>
              <div class="to">seunggi에게<svg class="tocaret"><use href="#caret"/></svg></div>
              <div class="body ko">
                <div class="ln">[<span class="k">파일 상세</span>]</div>
                <div class="ln">  <span class="k">파일 명</span> : BoB9 3<span class="k">차교육</span>_<span class="k">디지털포렌식</span>_Niko, <span class="k">정승기</span>_GameServerBreach_<span class="k">김태룡</span>.zip</div>
                <div class="ln">  <span class="k">파일 크기</span> : 9.42MB</div>
                <div class="ln">  MD5 : 443CD213983D0C21AA1E48CCC11E23B5</div>
                <div class="ln">  SHA-1 : FD28E4E9C7DEFF65A02EBD33E8B620F909CD2C9C</div>
                <div class="ln">  SHA-256 : C44A156D1175024E3B5DD5C8E700692359734BB3F05952855E76EBC6F447</div>
                <div class="ln">A457</div>
                <div class="ln"></div>
                <div class="ln">[<span class="k">본문</span>]</div>
                <div class="ln">   Niko <span class="ks">멘토님이 읽으실 수 있도록 영문 버전도 첨부합니다</span>!</div>
                <div class="ln">   (<span class="ks">러시아어는 도저히</span>...)</div>
                <div class="ln"></div>
                <div class="ln">[<span class="k">과제 깃허브</span>]</div>
                <div class="ln">  <a href="#">https://github.com/GoldBigDragon/BoB9_Homework</a></div>
                <div class="ln">  Access <span class="k">등록 대상</span> Email : <a href="#">seunggi@sortielab.com</a> (<span class="ks">메일함을 확인 해 주세요</span>!</div>
              </div>
              <div class="dots"></div>
              <div class="card">
                <div class="card-top"><div class="zip"><i></i></div></div>
                <div class="card-foot"><span class="ficon"></span><span class="fname">BoB9 3차교육_디지...</span></div>
                <svg class="fold" viewBox="0 0 51 26"><path fill="#fff" d="M25 0h26v26H25z"/><path fill="#c4c5c5" d="M0 26L25 0v26z"/><path fill="none" stroke="#eee" d="M26 26L51 0"/></svg>
              </div>
            </div>
          </div>
        </article>
        <div class="thumb"></div>
      </div>
    </div>
    <aside class="rail">
      <div class="calwrap"><svg class="ri"><use href="#cal"/></svg><span class="c31">31</span></div>
      <svg class="ri"><use href="#keep"/></svg>
      <svg class="ri"><use href="#tasks"/></svg>
      <svg class="ri"><use href="#cont"/></svg>
      <i class="rsep"></i>
      <svg class="i"><use href="#add"/></svg>
      <svg class="i rchev"><use href="#right"/></svg>
    </aside>
  </div>
</section>

</main>
</body>
</html>
```

FILE: styles.css
```css
* { box-sizing: border-box; }
html, body { margin: 0; padding: 0; height: 100%; overflow: hidden; background: #fff; }
body { font-family: Roboto, "Noto Sans CJK KR", sans-serif; color: #202124; }
.defs { position: absolute; width: 0; height: 0; }
svg { display: block; flex: none; }
.desk { display: flex; width: 2444px; height: 1030px; }
.win { width: 1222px; height: 1030px; display: flex; flex-direction: column; border: 1px solid #ffba00; border-top: 0; overflow: hidden; background: #fff; }

/* tab strip */
.tabstrip { height: 53px; flex: none; background: #ffba00; display: flex; align-items: flex-end; padding-left: 10px; position: relative; }
.tab { width: 300px; height: 42px; background: #35363a; border-radius: 10px 10px 0 0; display: flex; align-items: center; padding: 0 0 0 16px; position: relative; }
.tab::before, .tab::after { content: ""; position: absolute; bottom: 0; width: 10px; height: 10px; }
.tab::before { left: -10px; background: radial-gradient(circle at 0 0, transparent 10px, #35363a 10.5px); }
.tab::after { right: -10px; background: radial-gradient(circle at 100% 0, transparent 10px, #35363a 10.5px); }
.fav { width: 18px; height: 14px; }
.tab-title { margin-left: 11px; width: 222px; font: 15px/20px "Open Sans", "Noto Sans CJK KR", sans-serif; color: #e8eaed; white-space: nowrap; overflow: hidden; -webkit-mask-image: linear-gradient(90deg, #000 90%, transparent); mask-image: linear-gradient(90deg, #000 90%, transparent); }
.tab-x { width: 20px; height: 20px; margin-left: 2px; fill: #e8eaed; }
.newtab { width: 24px; height: 24px; fill: #222; margin: 0 0 8px 15px; }
.winctl { margin-left: auto; align-self: flex-start; display: flex; align-items: center; height: 38px; padding-right: 22px; }
.wc-min { width: 13px; height: 1px; background: #111; margin-right: 43px; }
.wc-max { width: 13px; height: 13px; border: 1px solid #111; margin-right: 44px; }
.wc-close { width: 14px; height: 14px; stroke: #111; stroke-width: 1; fill: none; }

/* browser toolbar */
.chrome { height: 47px; flex: none; background: #35363a; display: flex; align-items: center; padding-left: 15px; }
.cb { width: 24px; height: 24px; margin-right: 16px; fill: #e8eaed; }
.cb.dim { fill: #85878b; }
.cb.first { margin-left: 17px; }
.cb.big { width: 30px; height: 30px; margin: 0 9px 0 -2px; fill: #fff; }
.omni { width: 909px; height: 35px; background: #202124; border-radius: 18px; display: flex; align-items: center; padding-left: 14px; }
.lock { width: 16px; height: 16px; fill: #e8eaed; }
.url { margin-left: 12px; font: 17.15px/24px "Open Sans", sans-serif; color: #9aa0a6; white-space: nowrap; flex: 1; overflow: hidden; }
.url b { font-weight: 400; color: #fff; }
.omni-i { width: 22px; height: 22px; fill: #dadce0; margin-right: 18px; }
.omni-i.last { margin-right: 11px; }

/* gmail header */
.ghead { height: 80px; flex: none; display: flex; align-items: center; border-bottom: 1px solid #ececec; }
.brand { width: 320px; flex: none; display: flex; align-items: center; padding-left: 30px; }
.i { width: 30px; height: 30px; fill: #6b6e72; flex: none; }
.mlogo { width: 44px; height: 34px; margin-left: 22px; }
.gname { margin-left: 19px; font: 400 27.5px/36px "Open Sans", sans-serif; color: #5f6368; letter-spacing: -.6px; }
.searchbox { width: 650px; height: 60px; border-radius: 10px; background: #f1f3f4; display: flex; align-items: center; padding: 0 21px 0 20px; }
.q { margin-left: 22px; flex: 1; font-size: 20px; color: #202124; }
.q-caret { margin-left: 25px; }
.h1st { margin-left: 25px; }
.h2 { margin-left: 25px; }
.h3 { margin-left: 23px; }
.hlogo { width: 36px; height: 30px; margin-left: 27px; }

.main { flex: 1; min-height: 0; display: flex; }

/* sidebar */
.side { width: 320px; flex: none; display: flex; flex-direction: column; }
.compose { width: 171px; height: 60px; margin: 20px 0 0 10px; border-radius: 30px; background: #fff; box-shadow: 0 1px 3px rgba(60,64,67,.3), 0 3px 8px rgba(60,64,67,.15); display: flex; align-items: center; padding-left: 21px; font-size: 17.5px; letter-spacing: 1.400px; flex: none; color: #3c4043; }
.compose span { margin-left: 20px; margin-top: -3px; }
.nav { margin-top: 19px; height: 305px; flex: none; overflow: hidden; }
.row { width: 300px; height: 40px; display: flex; align-items: center; padding-left: 30px; border-radius: 0 20px 20px 0; position: relative; font-size: 17.5px; letter-spacing: 1.500px; color: #202124; flex: none; }
.row > span { margin-left: 21px; flex: 1; }
.row.on { background: #e8eaed; font-weight: 700; }
.row.bold { font-weight: 700; }
.row em { font-style: normal; font-weight: 400; font-size: 15px; color: #5f6368; margin-right: 14px; }
.tree { position: absolute; left: 10px; top: 10px; width: 20px; height: 20px; fill: #80868b; }
.sect { border-top: 1px solid #e9e9e9; flex: none; }
.sect-t { height: 30px; line-height: 30px; padding-left: 34px; font-size: 17.5px; letter-spacing: 1.400px; }
.meet { padding: 13px 0 11px; box-shadow: 0 -1px 2px rgba(0,0,0,.06); }
.meet .row { padding-left: 31px; }
.meet .sect-t + .row { margin-top: 6px; }
.meet .row + .row { margin-top: -1px; }
.hang { padding-top: 13px; }
.huser { margin: 8px 24px 0 29px; height: 48px; padding-bottom: 10px; border-bottom: 1px solid #e3e3e3; display: flex; align-items: center; }
.hava { width: 41px; height: 32px; position: relative; flex: none; margin-left: 2px; }
.hlogo2 { width: 30px; height: 25px; }
.dot { position: absolute; left: 27px; top: 18px; width: 14px; height: 14px; border-radius: 50%; background: #38ab26; }
.hname { font-size: 15px; letter-spacing: .900px; color: #5f6368; }
.hcaret { width: 20px; height: 20px; fill: #bdbdbd; margin-left: 4px; }
.hadd { margin-left: auto; }
.empty { margin-top: 60px; padding-left: 12px; text-align: center; font-size: 15px; line-height: 24px; letter-spacing: 2.200px; color: #80868b; flex: none; }
.empty a { color: #1a73e8; text-decoration: none; }
.sbot { margin-top: auto; height: 40px; flex: none; border-top: 1px solid #e9e9e9; display: flex; justify-content: center; }
.stab { width: 46px; display: flex; align-items: center; justify-content: center; }
.stab .i { width: 24px; height: 24px; }
.stab.act { background: #f1f1f1; }
.stab .blk { fill: #111; width: 26px; height: 26px; }

/* content */
.content { width: 831px; flex: none; display: flex; flex-direction: column; min-height: 0; }
.ctool { height: 60px; flex: none; width: 809px; border-bottom: 1px solid #ececec; display: flex; align-items: center; padding-left: 5px; }
.tb { width: 55px; height: 30px; display: flex; justify-content: center; flex: none; }
.b1 { margin-left: 15px; }
.bm { margin-left: -5px; }
.n { width: 50px; }
.tsep { width: 1px; height: 30px; background: #e8e8e8; margin: 0 11px 0 9px; flex: none; }
.cnt { width: 92px; margin-left: 21px; flex: none; font-size: 15.6px; color: #5f6368; white-space: nowrap; }
.scrollwrap { flex: 1; min-height: 0; display: flex; }
.mail { width: 816px; flex: none; overflow: hidden; padding-top: 24px; }
.thumb { width: 14px; height: 677px; background: #c9c9c9; }
.subj { margin-left: 91px; width: 701px; display: flex; align-items: flex-start; }
h1 { margin: 0; flex: 1; font-weight: 400; font-size: 28px; line-height: 36px; color: #202124; white-space: nowrap; }
.kt { letter-spacing: 1.700px; }
.impm { display: inline-block; width: 30px; height: 30px; vertical-align: -7px; margin-left: 1px; }
.sa { margin-top: 4px; }
.sa2 { margin: 4px 2px 0 15px; width: 26px; height: 26px; }
.msg { margin-top: 28px; padding-left: 25px; display: flex; align-items: flex-start; }
.ava { width: 42px; height: 33px; margin: 13px 24px 0 0; }
.msg-main { width: 701px; flex: none; }
.mh { height: 36px; display: flex; align-items: center; }
.who { font-size: 17.5px; font-weight: 700; color: #202124; }
.addr { font-size: 16px; color: #5f6368; margin-left: 5px; white-space: nowrap; }
.clip { width: 24px; height: 24px; margin-left: auto; margin-right: 9px; }
.date { font-size: 16.25px; color: #5f6368; white-space: nowrap; margin-right: 23px; }
.mstar { margin-right: 20px; }
.mrep { margin-right: 19px; }
.to { height: 20px; font-size: 16px; line-height: 20px; color: #5f6368; display: flex; align-items: center; }
.tocaret { width: 20px; height: 20px; fill: #5f6368; margin-left: 5px; }
.body { margin-top: 10px; font: 16.25px/24px "Liberation Sans", "Noto Sans CJK KR", sans-serif; color: #222; }
.body.ko { margin-top: 20px; }
.ln { height: 24px; white-space: pre; }
.k { letter-spacing: .7px; }
.ks { letter-spacing: 1.150px; }
.body a { color: #1155cc; }
.dots { margin-top: 19px; width: 698px; border-top: 1px dotted #ccc; }
.card { margin-top: 20px; width: 225px; height: 150px; border: 1px solid #e2e2e2; position: relative; display: flex; flex-direction: column; }
.card-top { height: 107px; flex: none; display: flex; align-items: center; justify-content: center; border-bottom: 1px solid #e2e2e2; }
.zip { width: 50px; height: 50px; background: #e4e4e4; border-radius: 2px; display: flex; justify-content: center; }
.zip i { width: 6px; height: 35px; border-left: 2px dotted #fff; border-right: 2px dotted #fff; border-radius: 0 0 3px 3px; border-bottom: 3px solid #fff; }
.card-foot { flex: 1; background: #f5f5f5; display: flex; align-items: center; padding-left: 10px; }
.ficon { width: 20px; height: 20px; border-radius: 2px; background: #5f6368 linear-gradient(#5f6368 3px, #fff 3px, #fff 5px, #5f6368 5px, #5f6368 7px, #fff 7px, #fff 9px, #5f6368 9px, #5f6368 11px, #fff 11px, #fff 13px, #5f6368 13px) center / 10px 100% no-repeat; flex: none; }
.fname { margin-left: 11px; font-size: 15.5px; font-weight: 700; color: #5f6368; white-space: nowrap; }
.fold { position: absolute; right: -1px; bottom: -1px; width: 51px; height: 26px; }
.btns { display: flex; gap: 15px; margin-top: 67px; margin-left: -1px; }
.rbtn { width: 130px; height: 50px; border: 1px solid #dadce0; border-radius: 5px; flex: none; }

/* right rail */
.rail { flex: 1; min-width: 0; border-left: 1px solid #ececec; display: flex; flex-direction: column; align-items: center; padding: 23px 0 18px; }
.calwrap { position: relative; width: 24px; height: 24px; margin-bottom: 46px; }
.c31 { position: absolute; left: 0; right: 0; top: 5px; text-align: center; font-size: 11px; line-height: 14px; font-weight: 500; color: #4285f4; }
.ri { width: 24px; height: 24px; margin-bottom: 47px; }
.rsep { width: 25px; height: 1px; background: #e0e0e0; margin: -7px 0 41px; flex: none; }
.rchev { margin-top: auto; }
```
